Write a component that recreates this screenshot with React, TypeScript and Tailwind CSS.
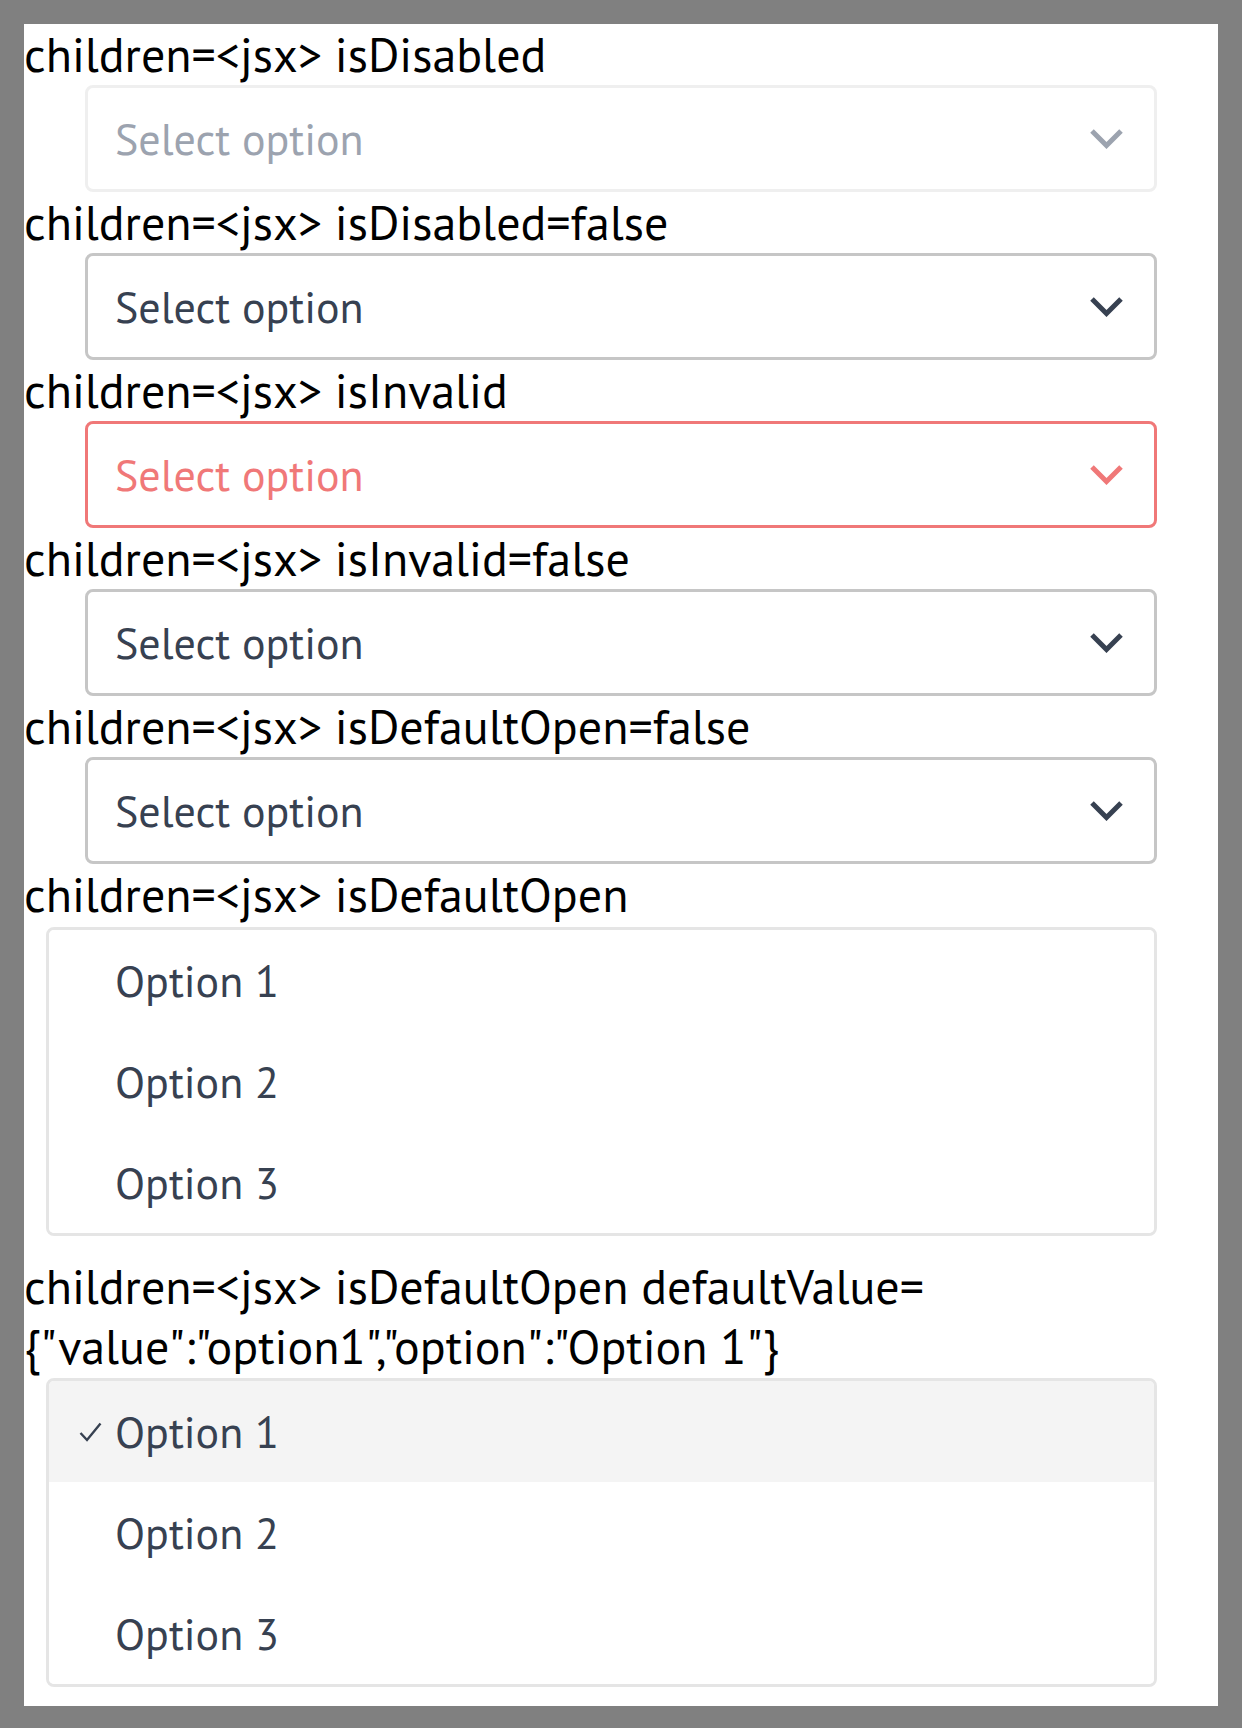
import React from "react";

const font = { fontFamily: '"PT Sans", Lato, "Liberation Sans", sans-serif' };

type Tone = "disabled" | "normal" | "invalid";

const tones: Record<Tone, { box: string; text: string; icon: string }> = {
  disabled: { box: "border-[#efefef]", text: "text-[#9ca3af]", icon: "#9ca3af" },
  normal: { box: "border-[#c6c6c6]", text: "text-[#374151]", icon: "#374151" },
  invalid: { box: "border-[#f07878]", text: "text-[#f07878]", icon: "#f07878" },
};

function Chevron({ color }: { color: string }) {
  return (
    <svg width="33" height="21" viewBox="0 0 33 21" fill="none">
      <polyline points="2,3 16.5,17.5 31,3" stroke={color} strokeWidth="5" />
    </svg>
  );
}

function Check() {
  return (
    <svg width="23" height="20" viewBox="0 0 23 20" fill="none">
      <polyline points="1.5,11 8,18 21.5,1.5" stroke="#374151" strokeWidth="2.4" />
    </svg>
  );
}

function Label({ children }: { children: React.ReactNode }) {
  return <div className="text-[48px] leading-[61px] text-black whitespace-nowrap">{children}</div>;
}

function SelectBox({ tone }: { tone: Tone }) {
  const t = tones[tone];
  return (
    <div
      className={`ml-[61px] mr-[61px] h-[107px] flex items-center justify-between border-[3px] rounded-lg bg-white pl-[27px] pr-[31px] ${t.box}`}
    >
      <span className={`text-[44px] ${t.text}`}>Select option</span>
      <Chevron color={t.icon} />
    </div>
  );
}

function ListBox({ selected, last }: { selected?: number; last?: boolean }) {
  const options = ["Option 1", "Option 2", "Option 3"];
  return (
    <div
      className={`ml-[22px] mr-[61px] mt-[2px] border-[3px] border-[#e5e5e5] rounded-lg overflow-hidden ${last ? "" : "mb-[20px]"}`}
    >
      {options.map((o, i) => (
        <div key={o} className={`h-[101px] flex items-center ${selected === i ? "bg-[#f4f4f4]" : "bg-white"}`}>
          <div className="w-[66px] flex justify-end pr-[13px]">{selected === i && <Check />}</div>
          <span className="text-[44px] text-[#374151]">{o}</span>
        </div>
      ))}
    </div>
  );
}

export default function App() {
  return (
    <div className="min-h-screen bg-[#808080] p-6" style={font}>
      <div className="bg-white pb-[19px]">
        <Label>children=&lt;jsx&gt; isDisabled</Label>
        <SelectBox tone="disabled" />
        <Label>children=&lt;jsx&gt; isDisabled=false</Label>
        <SelectBox tone="normal" />
        <Label>children=&lt;jsx&gt; isInvalid</Label>
        <SelectBox tone="invalid" />
        <Label>children=&lt;jsx&gt; isInvalid=false</Label>
        <SelectBox tone="normal" />
        <Label>children=&lt;jsx&gt; isDefaultOpen=false</Label>
        <SelectBox tone="normal" />
        <Label>children=&lt;jsx&gt; isDefaultOpen</Label>
        <ListBox />
        <div className="text-[48px] leading-[60px] text-black">
          <div>children=&lt;jsx&gt; isDefaultOpen defaultValue=</div>
          <div>{'{"value":"option1","option":"Option 1"}'}</div>
        </div>
        <ListBox selected={0} last />
      </div>
    </div>
  );
}
